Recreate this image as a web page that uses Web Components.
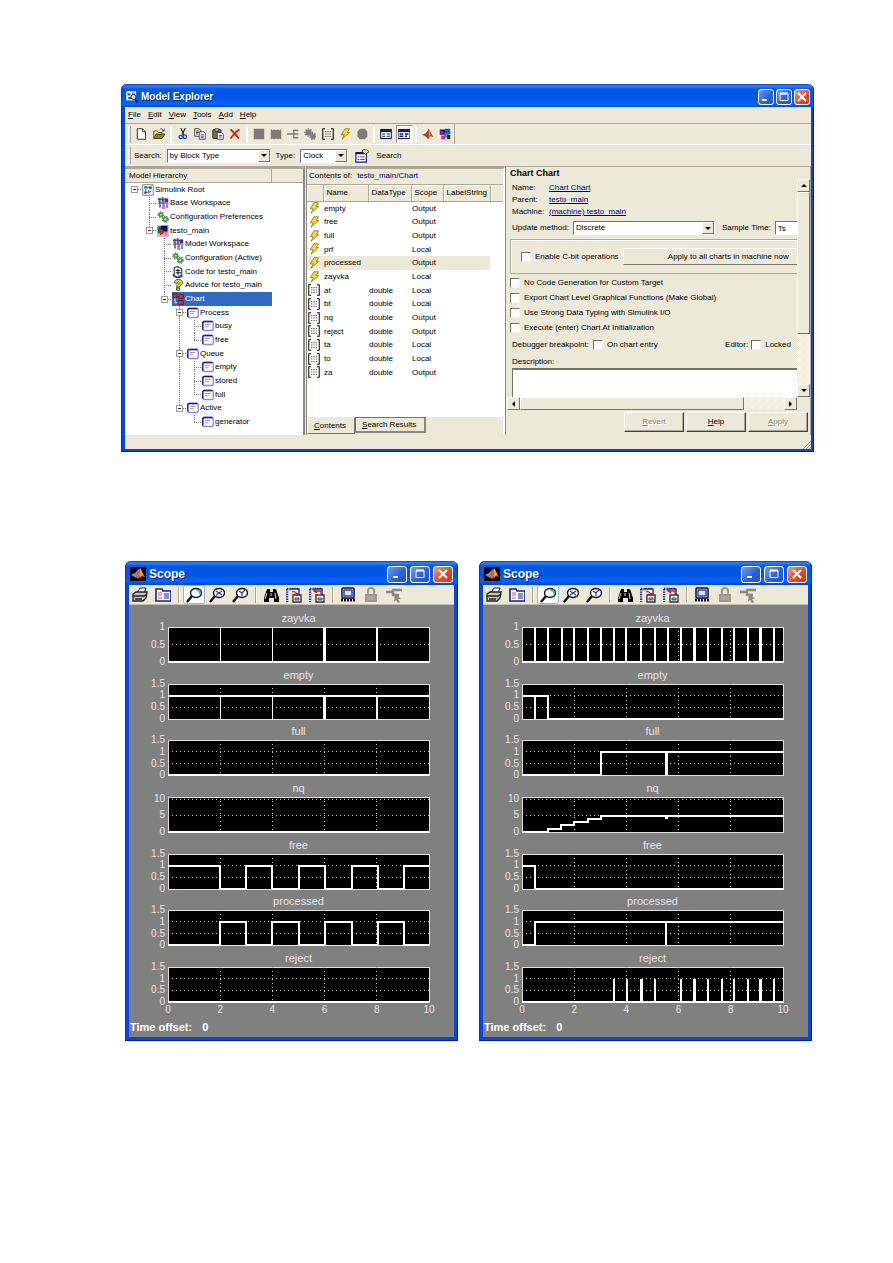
<!DOCTYPE html>
<html lang="en">
<head>
<meta charset="utf-8">
<title>Model Explorer and Scope windows</title>
<style>
  body { margin: 0; background: #fff; font-family: "Liberation Sans", Arial, sans-serif; font-size: 8px; line-height: 12px; color: #000; }
  main { padding: 84px 79px 60px 121px; }
  .scopes { display: flex; gap: 21px; margin-top: 109px; padding: 0 2px 0 4px; }
  scope-window { flex: 1; min-width: 0; }
</style>
</head>
<body>
<main>
  <model-explorer></model-explorer>
  <div class="scopes">
    <scope-window data-set="slow"></scope-window>
    <scope-window data-set="fast"></scope-window>
  </div>
</main>
<script>
const GEAR = (cx, cy, r, c) => `<circle cx="${cx}" cy="${cy}" r="${r}" fill="none" stroke="${c}" stroke-width="2.4"/><circle cx="${cx}" cy="${cy}" r="${r + 1.6}" fill="none" stroke="${c}" stroke-width="1.6" stroke-dasharray="1.6 1.7"/>`;
const WORKSPACE = '<rect x="2" y="1" width="3" height="9" fill="#2a8a70"/><rect x="6" y="0" width="3" height="6" fill="#c04fb8"/><rect x="10" y="2" width="5" height="5" fill="#40309a"/><path d="M1 3h13M3 8h12M8 4v11" stroke="#303080" stroke-width="1.5"/><path d="M7 9h4v7H7z" fill="#e070d0"/><path d="M12 8h3v7h-3z" fill="#48b8a0"/><path d="M3 10h2v4H3z" fill="#7030a0"/>';
const STATE = '<rect x="1" y="2" width="14" height="12" rx="2" fill="#fff" stroke="#8a86ec" stroke-width="1.800"/><path d="M1 13V4q0-2 2-2h11" fill="none" stroke="#1c1894" stroke-width="1.800"/><path d="M4 6h7M4 9h5" stroke="#777" stroke-width="1"/>';
const MAGNIFIER = inner => `<ellipse cx="10" cy="6" rx="5.5" ry="4.5" fill="#fff" stroke="#111" stroke-width="1.4"/><path d="M6 9l-5 6" stroke="#111" stroke-width="2.4"/>${inner}`;
const FLOPPY = arrow => `<path d="M1 2h11M1 2v13" stroke="#1a2a90" stroke-width="2.4" stroke-dasharray="1.4 1"/><path d="M5 2h8v6" fill="#fff" stroke="#1a2a90" stroke-width="1.4"/><path d="M7 8h8v7H7z" fill="#fff" stroke="#333" stroke-width="1.4"/><path d="M9 11h4v2H9z" fill="#aaa" stroke="#333" stroke-width=".8"/>${arrow}`;
const ICONS = {
  explorer: '<rect x="1" y="1" width="12" height="11" fill="#eef" stroke="#fff"/><path d="M2 3h4v3H2z" fill="#275"/><path d="M8 2h4v4H8z" fill="#d66"/><path d="M3 8h4v3H3z" fill="#357"/><circle cx="10" cy="8" r="3.4" fill="#cdeaf5" stroke="#223" stroke-width="1.3"/><path d="M12 11l3.5 4" stroke="#111" stroke-width="2"/>',
  matlabBox: '<path d="M0 1h16v14H0z" fill="#000"/><path d="M1 9l4-2 4-4 1 4-4 5z" fill="#4aa3d8"/><path d="M5 10l5-8 5 9-4-1-3 3z" fill="#e0602a"/><path d="M10 2l3 6-3 4z" fill="#f7a13c"/>',
  matlab: '<path d="M0 9l5-2 4-5 1 5-4 5z" fill="#3d63b8"/><path d="M4 10l5-9 6 11-4-1-3 4z" fill="#b83c1a"/><path d="M9 1l3 8-3 4z" fill="#f08a2c"/>',
  fresh: '<path d="M3 1h7l4 4v10H3z" fill="#fff" stroke="#111" stroke-width="1.1"/><path d="M10 1v4h4" fill="none" stroke="#111"/>',
  open: '<path d="M1 13V4h5l1 2h5v2" fill="#fff8a0" stroke="#222"/><path d="M1 14l3-6h12l-4 6z" fill="#8a8a10" stroke="#222"/><path d="M9 2c2-2 4-1 5 2M15 1v3h-3" fill="none" stroke="#222"/>',
  cut: '<path d="M5 0l4 9M11 0L7 9" stroke="#111" stroke-width="1.4"/><circle cx="5" cy="12" r="2.3" fill="none" stroke="#1a3cc0" stroke-width="1.6"/><circle cx="10.5" cy="11.5" r="2.3" fill="none" stroke="#1a3cc0" stroke-width="1.6"/>',
  copy: '<path d="M1 1h6l2 2v8H1z" fill="#fff" stroke="#111"/><path d="M2.500 4h4M2.500 6h4M2.500 8h3" stroke="#111"/><path d="M7 5h6l2 2v8H7z" fill="#fff" stroke="#14148a"/><path d="M9 9h4M9 11h4M9 13h4" stroke="#14148a"/>',
  paste: '<rect x="1" y="2" width="11" height="12" rx="1" fill="#7c7430" stroke="#111"/><path d="M4 1h5v3H4z" fill="#ddd" stroke="#111"/><path d="M7 6h6l2 2v7H7z" fill="#fff" stroke="#14148a"/><path d="M9 10h4M9 12h4" stroke="#14148a"/>',
  remove: '<path d="M2 2c4 3 8 8 11 12M14 2C9 5 5 10 2 14" fill="none" stroke="#e0170d" stroke-width="2.4"/>',
  square: '<path d="M1 1h14v14H1z" fill="#7d7b76"/>',
  jagged: '<path d="M1 1l2 2 3-1 2 1 2-1 3 1 2-2v14l-2-1-2 1-3-1-2 1-3-1-2 1z" fill="#7d7b76"/>',
  transition: '<path d="M0 8h8M15 3H9v10h6M9 8h6" fill="none" stroke="#7d7b76" stroke-width="1.8"/>',
  gearsGrey: '<circle cx="6" cy="6" r="4" fill="#7d7b76"/><circle cx="6" cy="6" r="4.800" fill="none" stroke="#7d7b76" stroke-width="1.500" stroke-dasharray="2 1.500"/><circle cx="12" cy="11" r="3.500" fill="#7d7b76"/><circle cx="12" cy="11" r="4.200" fill="none" stroke="#7d7b76" stroke-width="1.500" stroke-dasharray="2 1.500"/>',
  data: '<path d="M4 1H1v14h3M12 1h3v14h-3" fill="none" stroke="#111" stroke-width="1.400"/><path d="M5 4v9M8 4v9M11 4v9" stroke="#444" stroke-width="1.400" stroke-dasharray="1.500 1.800"/>',
  event: '<path d="M8 1h6l-3 5h3L4 15l3-6H3z" fill="#f6d63a" stroke="#8a6a10" stroke-width="1"/>',
  octagon: '<path d="M5 1h7l3 4v6l-3 4H5l-3-4V5z" fill="#7d7b76"/>',
  viewList: '<rect x="1" y="2" width="14" height="12" fill="#fff" stroke="#181c60" stroke-width="1.500"/><path d="M1 4h14" stroke="#181c60" stroke-width="3"/><path d="M3 8h4M3 11h4M9 8h4M9 11h4" stroke="#181c60" stroke-width="1.600"/>',
  viewDialog: '<rect x="0" y="2" width="16" height="12" fill="#fff" stroke="#181c60" stroke-width="1.500"/><path d="M0 4h16" stroke="#181c60" stroke-width="3"/><path d="M2 8h5M2 11h5M9 8h5M9 11h3" stroke="#181c60" stroke-width="1.800"/>',
  simulink: '<path d="M1 2h7v7H1z" fill="#14148a"/><path d="M2 3l5 3-5 3z" fill="#e81a50"/><path d="M8 1h7v7H8z" fill="#1e58c8"/><path d="M7 7h6v6H7z" fill="#0aa89a"/><path d="M3 10h5v5H3z" fill="#d81ad0"/><path d="M11 9h4v6h-4z" fill="#111"/>',
  find: '<path d="M1 4h12v11H1z" fill="#fff" stroke="#14148a" stroke-width="1.300"/><path d="M1 4h12v2H1z" fill="#14148a"/><path d="M3 9h2M6 9h5M3 12h2M6 12h5" stroke="#333"/><path d="M9 1h5l2 2-4 3-4-3z" fill="#fff080" stroke="#333"/>',
  root: '<path d="M1 1h14v14H1z" fill="#fff" stroke="#555"/><path d="M3 3h4v3H3z" fill="#179"/><path d="M9 3h4v4H9z" fill="#15a0a0"/><path d="M7 5h6M5 6v6M5 11h5" stroke="#333"/><path d="M8 8l5 2-5 3z" fill="#d040c8"/><path d="M3 10h3v3H3z" fill="#3940b0"/>',
  workspace: WORKSPACE,
  config: GEAR(5, 5, 2.2, '#3f9a48') + GEAR(11, 11, 2.4, '#5a8a50') + '<circle cx="5" cy="5" r="1" fill="#cfc"/>',
  model: '<path d="M0 0h16v16H0z" fill="#c9c5b8"/><path d="M1 2h7v9H1z" fill="#0a7a60"/><path d="M5 1h9v8H5z" fill="#101060"/><path d="M4 5l7 4-7 5z" fill="#f01818"/><path d="M10 9h4v5h-4z" fill="#e070e0"/>',
  code: '<path d="M3 2l5-1 5 3v8l-5 3-5-2z" fill="#fff" stroke="#223a90" stroke-width="1.600"/><path d="M8 4v8M5 6h6M5 9h7" stroke="#111" stroke-width="1.300"/><path d="M1 11c2 5 9 6 13 2" fill="none" stroke="#223a90" stroke-width="1.700"/>',
  advice: '<path d="M3 5c0-6 11-6 11 0 0 3-4 3-4 6H6c0-4 4-4 4-6 0-2-3-2-3 1z" fill="#f4e21a" stroke="#222"/><path d="M6 12h4v3H6z" fill="#f4e21a" stroke="#222"/>',
  chart: '<path d="M4 6v7h6M6 3h4" fill="none" stroke="#e9e0ff" stroke-width="1.300"/><path d="M1 1h6v5H1zM9 2h6v5H9zM8 10h7v5H8z" fill="#e8301c" stroke="#400a30"/>',
  state: STATE,
  print: '<path d="M5 6l3-5h6l-2 5" fill="#fff" stroke="#222"/><path d="M1 7l3-2h11l-1 6-3 3H1z" fill="#c8c6b8" stroke="#222" stroke-width="1.400"/><path d="M1 9h11l3-2M3 12h7" fill="none" stroke="#222" stroke-width="1.300"/>',
  params: '<path d="M1 2h6l1 2h8v10H1z" fill="#fff" stroke="#1c1c98" stroke-width="1.600"/><path d="M3 6h4M3 8h4M3 11h4" stroke="#e05028" stroke-width="1.200"/><path d="M9 7h5M9 9h5M9 11h5" stroke="#1c1c98" stroke-width="1.200"/>',
  zoom: MAGNIFIER('<path d="M10 3c3 0 4 2 4 4" fill="none" stroke="#2cc" stroke-width="1.600"/>'),
  zoomX: MAGNIFIER('<path d="M7 4l6 4M13 4l-6 4" stroke="#2238a8" stroke-width="1.200"/>'),
  zoomY: MAGNIFIER('<path d="M7 4l3 2 3-3M10 6v3" fill="none" stroke="#2238a8" stroke-width="1.200"/>'),
  binoculars: '<path d="M4 2h3v3h3V2h3l3 9v4h-5v-4H6v4H1v-4z" fill="#000"/><path d="M4 6l-2 6M12 6l1 6M8 6v3" stroke="#ddd"/>',
  saveAxes: FLOPPY('<path d="M6 5c3-1 4 0 5 3l1-2M11 8l-3-1" fill="none" stroke="#c02020" stroke-width="1.300"/>'),
  restoreAxes: FLOPPY('<path d="M12 7V4H5M8 2L5 4l3 2" fill="none" stroke="#c02020" stroke-width="1.300"/>'),
  floating: '<rect x="2" y="1" width="12" height="10" rx="1" fill="#fff" stroke="#111" stroke-width="1.500"/><rect x="4" y="3" width="8" height="6" fill="#dfe4ff" stroke="#2430e0" stroke-width="1.400"/><path d="M1 13h14" stroke="#111" stroke-width="3" stroke-dasharray="2 1"/>',
  lock: '<path d="M5 8V4c0-4 6-4 6 0v4" fill="none" stroke="#9a9890" stroke-width="2"/><path d="M2 7h12v8H2z" fill="#9a9890"/><path d="M4 10h8M4 12h8" stroke="#b4b2a8"/>',
  signal: '<path d="M0 5h7M7 3h9M7 8h6M7 2v7" fill="none" stroke="#8a8880" stroke-width="2.400"/><path d="M9 6l6 6-3 0 2 3-2 1-2-3-2 2z" fill="#8a8880"/>'
};

/* Registers an element whose open shadow root is cloned from a template. */
function element(tag, css, markup, setup) {
  const template = document.createElement('template');
  template.innerHTML = `<style>*{box-sizing:border-box}${css}</style>${markup}`;
  customElements.define(tag, class extends HTMLElement {
    constructor() {
      super();
      this.attachShadow({ mode: 'open' }).append(template.content.cloneNode(true));
    }
    connectedCallback() { if (setup && !this.ready) { this.ready = true; setup(this, this.shadowRoot); } }
  });
}

element('ui-icon',
  ':host{display:block;width:var(--icon,12px);height:var(--icon,12px);flex:none}svg{display:block;width:100%;height:100%}',
  '<svg viewBox="0 0 16 16" aria-hidden="true"></svg>',
  (host, root) => { root.querySelector('svg').innerHTML = ICONS[host.getAttribute('name')]; });

element('xp-window', `
  :host{display:flex;flex-direction:column;padding:0 var(--edge,3px) var(--edge,3px) 4px;border-radius:6px 6px 0 0;
    background:linear-gradient(#0a3cc8,#2f86ff 2px,#0058e6 5px,#0055e5 14px,#0466ff 20px,#0648d0 23px,#0a46dc 24px);box-shadow:inset -1px -1px #0019a8,inset 1px 0 #0831d9}
  header{display:flex;align-items:center;height:var(--bar,23px);padding:2px 1px 0 1px;gap:3px}
  h1{flex:1;margin:0;color:#fff;font-size:var(--title,10px);line-height:16px;font-weight:bold;text-shadow:1px 1px #0a2a90}
  .controls{display:flex;gap:var(--control-gap,2px)}
  button{width:var(--control-w,16px);height:var(--control-h,16px);padding:0;border:1px solid #fff;border-radius:3px;background:linear-gradient(135deg,#6f9df5,#2a5fd8 60%,#2456c8);display:grid;place-items:center}
  button.close{background:linear-gradient(135deg,#f0987c,#dd4a24 60%,#c83a14)}
  svg{width:12px;height:12px;display:block}
  .body{flex:1;background:#ece9d8;min-width:0}`, `
  <header><slot name="icon"></slot><h1></h1><div class="controls">
    <button aria-label="Minimize"><svg viewBox="0 0 12 12"><path d="M2 9h5" stroke="#fff" stroke-width="2"/></svg></button>
    <button aria-label="Maximize"><svg viewBox="0 0 12 12"><path d="M2 2.500h8v7H2z" fill="none" stroke="#fff"/><path d="M2 2.500h8" stroke="#fff" stroke-width="2"/></svg></button>
    <button class="close" aria-label="Close"><svg viewBox="0 0 12 12"><path d="M2 2l8 8M10 2l-8 8" stroke="#fff" stroke-width="2"/></svg></button>
  </div></header><div class="body"><slot></slot></div>`,
  (host, root) => { root.querySelector('h1').textContent = host.getAttribute('caption'); });

element('tool-button', `
  :host{display:block;flex:none}
  button{display:grid;place-items:center;width:var(--tool-w,17px);height:var(--tool-h,18px);padding:0;border:1px solid transparent;background:none}
  :host([pressed]) button{background:#f8f7f2;border-color:#9a988c #fff #fff #9a988c}
  :host([active]) button{background:#fff;border-color:#98b5d6;border-radius:2px}`,
  '<button></button>',
  (host, root) => {
    const button = root.querySelector('button');
    button.setAttribute('aria-label', host.getAttribute('label'));
    button.innerHTML = `<ui-icon name="${host.getAttribute('icon')}"></ui-icon>`;
  });

element('combo-box', `
  :host{display:grid;height:14px;min-width:0;border:1px solid;border-color:#76746a #fff #fff #76746a;background:#fff}
  select{grid-area:1/1;width:100%;min-width:0;appearance:none;border:0;border-radius:0;margin:0;padding:0 14px 0 2px;background:none;font:inherit;line-height:12px;color:#000}
  i{grid-area:1/1;justify-self:end;width:12px;display:grid;place-items:center;background:#ece9d8;border:1px solid;border-color:#fff #76746a #76746a #fff;pointer-events:none}
  i::after{content:"";border:3px solid transparent;border-top-color:#000;border-bottom:0}`,
  '<select><option></option></select><i></i>',
  (host, root) => {
    root.querySelector('option').textContent = host.getAttribute('value');
    root.querySelector('select').setAttribute('aria-label', host.getAttribute('label'));
  });

element('check-field', `
  :host{display:block}
  label{display:flex;align-items:center;gap:4px}
  input{appearance:none;flex:none;width:10px;height:10px;margin:0;background:#fff;border:1px solid;border-color:#76746a #f4f2ea #f4f2ea #76746a}`,
  '<label><input type="checkbox"><span><slot></slot></span></label>');

element('menu-bar', `
  :host{display:flex;gap:7px;height:17px;padding:2px 3px 0;border-bottom:1px solid #aca899}
  button{padding:0;border:0;background:none;font:inherit;line-height:12px;height:12px;color:#000}`,
  ['File', 'Edit', 'View', 'Tools', 'Add', 'Help'].map(t => `<button><u>${t[0]}</u>${t.slice(1)}</button>`).join(''));

const tool = (icon, label, extra = '') => `<tool-button icon="${icon}" label="${label}" ${extra}></tool-button>`;
element('explorer-tools', `
  :host{display:block}
  .row{display:flex;align-items:center;padding-left:3px}
  .first{height:21px;border-bottom:1px solid #fff}
  .group{display:flex;justify-content:space-around;align-items:center}
  .grip,.sep{flex:none;height:17px;border-left:1px solid #fff;border-right:1px solid #aca899}
  .grip{width:3px;margin:0 1px 0 0}.sep{width:2px;margin:0 2px;border-color:#aca899 #fff}
  .two{width:36px}.four{width:70px}.seven{width:121px}.end{border-right:1px solid #aca899;width:36px;height:20px}
  .second{height:22px;border-bottom:1px solid #aca899}
  .second>*{margin-right:5px}.second .grip{margin-right:3px}
  .block{width:104px}.type{width:48px}.second ui-icon{margin:0 7px 0 2px}`, `
  <div class="row first"><span class="grip"></span>
    <div class="group two">${tool('fresh', 'New')}${tool('open', 'Open')}</div><span class="sep"></span>
    <div class="group four">${tool('cut', 'Cut')}${tool('copy', 'Copy')}${tool('paste', 'Paste')}${tool('remove', 'Delete')}</div><span class="sep"></span>
    <div class="group seven">${tool('square', 'Block')}${tool('jagged', 'Model reference')}${tool('transition', 'Transition')}${tool('gearsGrey', 'Configuration')}${tool('data', 'Add data')}${tool('event', 'Add event')}${tool('octagon', 'Target')}</div><span class="sep"></span>
    <div class="group two">${tool('viewList', 'List view')}${tool('viewDialog', 'Dialog view', 'pressed')}</div><span class="sep"></span>
    <div class="group end">${tool('matlab', 'MATLAB')}${tool('simulink', 'Simulink library')}</div>
  </div>
  <div class="row second"><span class="grip"></span><span>Search:</span>
    <combo-box class="block" label="Search" value="by Block Type"></combo-box><span>Type:</span>
    <combo-box class="type" label="Type" value="Clock"></combo-box>
    <ui-icon name="find" style="--icon:14px"></ui-icon><span>Search</span></div>`);

/* level, icon, label, has children, last among its siblings */
const TREE = [
  [0, 'root', 'Simulink Root', 1, 1], [1, 'workspace', 'Base Workspace', 0, 0], [1, 'config', 'Configuration Preferences', 0, 0],
  [1, 'model', 'testo_main', 1, 1], [2, 'workspace', 'Model Workspace', 0, 0], [2, 'config', 'Configuration (Active)', 0, 0],
  [2, 'code', 'Code for testo_main', 0, 0], [2, 'advice', 'Advice for testo_main', 0, 0], [2, 'chart', 'Chart', 1, 1],
  [3, 'state', 'Process', 1, 0], [4, 'state', 'busy', 0, 0], [4, 'state', 'free', 0, 1],
  [3, 'state', 'Queue', 1, 0], [4, 'state', 'empty', 0, 0], [4, 'state', 'stored', 0, 0], [4, 'state', 'full', 0, 1],
  [3, 'state', 'Active', 1, 1], [4, 'state', 'generator', 0, 1]
];
function treeRows() {
  const open = [];
  return TREE.map(([level, icon, label, parent, last]) => {
    open[level] = !last;
    let cells = '';
    for (let i = 0; i < level; i++) cells += `<span class="cell ${open[i] ? 'through' : ''}"></span>`;
    cells += `<span class="cell elbow ${level ? (last ? 'last' : 'mid') : 'top'}">${parent ? `<button aria-label="Collapse ${label}"></button>` : ''}</span>`;
    return `<div class="node ${label === 'Chart' ? 'selected' : ''}" role="treeitem">${cells}<span class="name"><ui-icon name="${icon}"></ui-icon><span>${label}</span></span></div>`;
  }).join('');
}
element('model-tree', `
  :host{display:flex;flex-direction:column;min-width:0;border-top:2px solid #aca899}
  .head{display:flex;height:14px;background:#ece9d8;border-bottom:1px solid #aca899}
  .head span{padding-left:4px;line-height:13px}.head span:first-child{flex:1;border-right:1px solid #aca899}.head span:last-child{width:31px}
  .tree{flex:1;background:#fff;padding-right:31px}
  .nodes{display:grid;grid-auto-rows:1fr;height:246px}
  .node{display:flex;min-height:0;padding-left:2px}
  .cell{--v:repeating-linear-gradient(#777 0 1px,transparent 1px 2px);--h:repeating-linear-gradient(90deg,#777 0 1px,transparent 1px 2px);flex:none;width:15px;display:grid;place-items:center;background-repeat:no-repeat}
  .through{background-image:var(--v);background-size:1px 100%;background-position:7px 0}
  .top{background-image:var(--h);background-size:7px 1px;background-position:7px 50%}
  .mid{background-image:var(--v),var(--h);background-size:1px 100%,8px 1px;background-position:7px 0,7px 50%}
  .last{background-image:var(--v),var(--h);background-size:1px 50%,8px 1px;background-position:7px 0,7px 50%}
  button{width:7px;height:7px;padding:0;border:1px solid #a09e94;background:linear-gradient(#333,#333) center/3px 1px no-repeat #fff}
  .name{flex:1;display:flex;align-items:center;gap:1px;min-width:0;white-space:nowrap}
  .selected .name{background:#316ac5;color:#fff}`,
  `<div class="head"><span>Model Hierarchy</span><span></span></div><div class="tree"><div class="nodes" role="tree">${treeRows()}</div></div>`);

const ROWS = [
  ['empty', '', 'Output'], ['free', '', 'Output'], ['full', '', 'Output'], ['prf', '', 'Local'], ['processed', '', 'Output'], ['zayvka', '', 'Local'],
  ['at', 'double', 'Local'], ['bt', 'double', 'Local'], ['nq', 'double', 'Output'], ['reject', 'double', 'Output'], ['ta', 'double', 'Local'], ['to', 'double', 'Local'], ['za', 'double', 'Output']
];
element('contents-pane', `
  :host{display:flex;flex-direction:column;min-width:0;border-left:1px solid #8a8880;border-top:2px solid #aca899;border-right:2px solid #fff}
  .path{height:16px;line-height:14px;padding-left:2px;border-bottom:1px solid #aca899}.path b{font-weight:normal;color:#000080;margin-left:5px}
  .list{flex:1;background:#fff}
  table{width:100%;border-collapse:collapse;table-layout:fixed}
  th,td{padding:0;font-weight:normal;text-align:left;line-height:12px}
  th{height:16px;background:#ece9d8;border-right:1px solid #aca899;border-bottom:1px solid #aca899;padding-left:3px;box-shadow:inset 1px 1px #fff}
  th:last-child{border-right:0}
  td{padding-left:1px;line-height:13px}
  tr.on td:not(:last-child){background:#ece9d8}
  tbody tr{height:var(--row)}
  .tabs{display:flex;height:18px}
  .tabs button{padding:0 8px 0 6px;font:inherit;background:#ece9d8;color:#000;border:1px solid;border-color:#ece9d8 #76746a #76746a #fff;height:17px}
  .tabs button+button{border-color:#76746a #8a8880 #8a8880 #76746a;height:16px;border-width:1px 2px 2px 1px}`,
  `<div class="path">Contents of:<b>testo_main/Chart</b></div><div class="list"><table>
   <colgroup><col style="width:16px"><col style="width:45px"><col style="width:43px"><col style="width:32px"><col style="width:47px"><col></colgroup>
   <thead><tr><th></th><th>Name</th><th>DataType</th><th>Scope</th><th>LabelString</th><th></th></tr></thead><tbody>${ROWS.map(([n, d, s], i) =>
    `<tr style="--row:${i % 3 ? 14 : 13}px"${n === 'processed' ? ' class="on"' : ''}><td><ui-icon name="${d ? 'data' : 'event'}"></ui-icon></td><td>${n}</td><td>${d}</td><td>${s}</td><td></td><td></td></tr>`).join('')}</tbody></table></div>
   <div class="tabs"><button><u>C</u>ontents</button><button><u>S</u>earch Results</button></div>`);

element('chart-dialog', `
  :host{display:flex;flex-direction:column;min-width:0;padding:1px 0 0 1px;border-left:1px solid #8a8880;border-right:1px solid #aca899}
  h2{margin:0 0 0 3px;font-size:9px;line-height:11px}
  .scroll{display:grid;grid-template-columns:minmax(0,1fr) 13px;grid-template-rows:218px 13px}
  .view{overflow:hidden;padding:3px 0 0 3px}
  form{width:calc(100% + 38px)}
  dl{display:grid;grid-template-columns:37px 1fr;grid-auto-rows:12px;margin:0 0 3px 2px}dd{margin:0}a{color:#000080}
  .line{display:flex;align-items:center;gap:4px;padding-left:2px}
  .line combo-box{width:142px;margin-right:3px}
  input[type=text]{flex:1;min-width:0;height:14px;padding:0 2px;border:1px solid;border-color:#76746a #fff #fff #76746a;background:#fff;font:inherit}
  fieldset{display:flex;align-items:center;height:35px;margin:4px 0 2px;padding:0 0 0 10px;border:1px solid #aca899;box-shadow:inset 1px 1px #fff}
  fieldset button{flex:1;height:17px;margin-left:4px}
  button{padding:0;font:inherit;color:#000;background:#ece9d8;border:1px solid;border-color:#fff #76746a #76746a #fff}
  .checks check-field{height:15px;padding-top:1px}
  .debug{margin-top:2px;height:14px}.debug .lock{display:flex;gap:3px;margin-left:auto;margin-right:44px}
  .desc{display:block;margin:4px 0 0 2px}
  textarea{display:block;margin-left:2px;width:calc(100% - 2px);height:50px;border:1px solid #76746a;border-width:2px 1px 1px 1px;border-radius:0;background:#fff;resize:none;font:inherit}
  .bar{display:flex;background:repeating-conic-gradient(#fff 0 25%,#ece9d8 0 50%) 0 0/2px 2px}
  .v{flex-direction:column}
  .bar button{flex:none;width:13px;height:13px;display:grid;place-items:center}
  .bar button::after{content:"";border:3px solid transparent}
  .bar .up::after{border-bottom-color:#000;border-top:0}.bar .down::after{border-top-color:#000;border-bottom:0}
  .bar .left::after{border-right-color:#000;border-left:0}.bar .right::after{border-left-color:#000;border-right:0}
  .thumb{background:#ece9d8;border:1px solid;border-color:#fff #76746a #76746a #fff}
  .v .thumb{flex:0 0 142px}.v .down{margin-top:auto}.h .thumb{flex:0 0 224px}.h .right{margin-left:auto}
  footer{display:flex;justify-content:flex-end;gap:2px;padding:2px 2px 0 0}
  footer button{width:60px;height:20px;border-color:#fff #44423a #44423a #fff;box-shadow:inset -1px -1px #aca899}
  footer button:disabled{color:#8a8778;text-shadow:1px 1px #fff}`, `
  <h2>Chart Chart</h2>
  <div class="scroll"><div class="view"><form>
    <dl><dt>Name:</dt><dd><a href="#chart">Chart Chart</a></dd><dt>Parent:</dt><dd><a href="#parent">testo_main</a></dd><dt>Machine:</dt><dd><a href="#machine">(machine) testo_main</a></dd></dl>
    <div class="line"><span>Update method:</span><combo-box label="Update method" value="Discrete"></combo-box><label for="ts">Sample Time:</label><input type="text" id="ts" value="Ts"></div>
    <fieldset><check-field>Enable C-bit operations</check-field><button type="button">Apply to all charts in machine now</button></fieldset>
    <div class="checks"><check-field>No Code Generation for Custom Target</check-field><check-field>Export Chart Level Graphical Functions (Make Global)</check-field><check-field>Use Strong Data Typing with Simulink I/O</check-field><check-field>Execute (enter) Chart At Initialization</check-field></div>
    <div class="line debug"><span>Debugger breakpoint:</span><check-field>On chart entry</check-field><span class="lock"><span>Editor:</span><check-field>Locked</check-field></span></div>
    <label class="desc" for="d">Description:</label><textarea id="d"></textarea>
  </form></div>
  <div class="bar v"><button class="up" aria-label="Scroll up"></button><span class="thumb"></span><button class="down" aria-label="Scroll down"></button></div>
  <div class="bar h"><button class="left" aria-label="Scroll left"></button><span class="thumb"></span><button class="right" aria-label="Scroll right"></button></div></div>
  <footer><button disabled><u>R</u>evert</button><button><u>H</u>elp</button><button disabled><u>A</u>pply</button></footer>`);

element('model-explorer', `
  :host{display:block}
  .panes{display:grid;grid-template-columns:minmax(0,180fr) minmax(0,200fr) minmax(0,306fr);height:268px}
  model-tree{border-right:2px solid #8a8880}
  contents-pane{margin-left:1px}
  .status{height:14px;display:flex;justify-content:flex-end;align-items:flex-end}
  .status svg{width:9px;height:9px}`, `
  <xp-window caption="Model Explorer"><ui-icon slot="icon" name="explorer"></ui-icon>
  <menu-bar></menu-bar><explorer-tools></explorer-tools>
  <div class="panes"><model-tree></model-tree><contents-pane></contents-pane><chart-dialog></chart-dialog></div>
  <div class="status"><svg viewBox="0 0 9 9"><path d="M1 9l8-8M4 9l5-5M7 9l2-2" stroke="#9a988c"/></svg></div></xp-window>`);

/* trace: step changes as time:value; spikes: time, then - for a thin or ! for a wide one, optional @low-high */
const P = (title, max, ticks, trace, spikes = '') => ({ title, max, ticks, trace, spikes });
const LOW = [1.5, 1, 0.5, 0];
const SETS = {
  slow: [
    P('zayvka', 1, [1, 0.5, 0], '0:0', '2- 4- 6! 8'), P('empty', 1.5, LOW, '0:1', '2- 4- 6! 8'), P('full', 1.5, LOW, '0:0'), P('nq', 10.7, [10, 5, 0], '0:0'),
    P('free', 1.5, LOW, '0:1 2:0 3:1 4:0 5:1 6:0 7.05:1 8.05:0 9.05:1'), P('processed', 1.5, LOW, '0:0 2:1 3:0 4:1 5:0 6:1 7.05:0 8.05:1 9.05:0'), P('reject', 1.5, LOW, '0:0')
  ],
  fast: [
    P('zayvka', 1, [1, 0.5, 0], '0:0', '0.5 1 1.52 2 2.54 3.04 3.53 4 4.57 5.09 5.58 6.09 6.6! 7.14 7.65 8.13 8.65 9.14! 9.65'),
    P('empty', 1.5, LOW, '0:1 1:0', '0.5'), P('full', 1.5, LOW, '0:0 3.04:1', '5.53!'),
    P('nq', 10.7, [10, 5, 0], '0:0 1:1 1.5:2 2:3 2.54:4 3.04:5', '5.53!@4-5'),
    P('free', 1.5, LOW, '0:1 0.5:0'), P('processed', 1.5, LOW, '0:0 0.5:1', '5.5'),
    P('reject', 1.5, LOW, '0:0', '3.53 4.04 4.57! 5.09 6.09 6.6! 7.14 7.65 8.13 8.65 9.14! 9.65')
  ]
};
element('scope-plot', `
  :host{display:grid;grid-template-columns:39px minmax(0,1fr) 25px;grid-template-rows:12px 35px;row-gap:3px;color:#e6e6e6;font-size:10px}
  h2{grid-column:2;margin:0;text-align:center;font-size:11px;font-weight:normal;line-height:12px}
  .ticks{grid-column:1;display:flex;flex-direction:column;justify-content:space-between;margin:-5px 0;padding-right:3px;text-align:right;line-height:10px}
  .ticks.ten{padding-top:2px}
  svg{display:block;width:100%;height:35px;overflow:visible;fill:none;stroke:#fff;shape-rendering:crispEdges}
  svg *{vector-effect:non-scaling-stroke}
  .grid{stroke:#c4c4c4;stroke-dasharray:1 3}
  .wide{stroke-width:3}.trace{stroke-width:2}`,
  '<h2></h2><div class="ticks"></div><svg preserveAspectRatio="none"></svg>',
  (host, root) => {
    const { title, max, ticks, trace, spikes } = host.plot, y = v => (max - v) / max * 34;
    root.querySelector('h2').textContent = title;
    const list = root.querySelector('.ticks');
    list.innerHTML = ticks.map(t => `<span>${t}</span>`).join('');
    list.classList.toggle('ten', max > 10);
    let grid = '', line = '';
    for (const x of [2, 4, 6, 8]) grid += `M${x * 26} 0V34`;
    for (const t of ticks) if (t && t < max) grid += `M0 ${y(t)}H260`;
    trace.split(' ').forEach((s, i) => { const [t, v] = s.split(':'); line += i ? `H${t * 26}V${y(v)}` : `M0 ${y(v)}`; });
    const bars = spikes.split(' ').filter(Boolean).map(s => {
      const [, t, weight, lo = 0, hi = 1] = s.match(/^([\d.]+)([!-]?)(?:@(\d+)-(\d+))?$/);
      return `<path class="${{ '!': 'wide', '-': 'thin' }[weight] || 'trace'}" d="M${t * 26} ${y(lo)}V${y(hi)}"/>`;
    }).join('');
    const svg = root.querySelector('svg');
    svg.setAttribute('viewBox', '0 0 260 34');
    svg.innerHTML = `<path d="M0 0H260V34H0z" fill="#000" stroke="#e0e0e0"/><path class="grid" d="${grid}"/><path class="trace" d="${line}H260"/>${bars}`;
  });

element('scope-window', `
  :host{display:block;--icon:16px;--bar:24px;--title:12px;--edge:4px;--control-w:20px;--control-h:17px;--control-gap:3px}
  .tools{display:flex;align-items:center;height:20px;--tool-w:22px;--tool-h:19px;gap:1px;border-bottom:1px solid #c0bdb0}
  .sep{width:2px;height:16px;border-left:1px solid #aca899;border-right:1px solid #fff;margin:0 2px 0 3px}
  .face{background:#808080;padding:7px 0 3px;color:#e6e6e6}
  .plots{display:flex;flex-direction:column;justify-content:space-between;height:390px}
  .axis{display:flex;justify-content:space-between;margin:3px 15px 0 29px;font-size:10px;line-height:10px}
  .axis span{width:20px;text-align:center}
  .time{margin:5px 0 0 1px;font-size:11px;line-height:14px;font-weight:bold;color:#fff}.time b{margin-left:10px}`, `
  <xp-window caption="Scope"><ui-icon slot="icon" name="matlabBox"></ui-icon>
  <div class="tools">${tool('print', 'Print')}${tool('params', 'Parameters')}<span class="sep"></span>${tool('zoom', 'Zoom', 'active')}${tool('zoomX', 'Zoom X-axis')}${tool('zoomY', 'Zoom Y-axis')}<span class="sep"></span>${tool('binoculars', 'Autoscale')}${tool('saveAxes', 'Save axes')}${tool('restoreAxes', 'Restore axes')}<span class="sep"></span>${tool('floating', 'Floating scope')}${tool('lock', 'Lock axes')}${tool('signal', 'Signal selection')}</div>
  <div class="face"><div class="plots"></div>
  <div class="axis"><span>0</span><span>2</span><span>4</span><span>6</span><span>8</span><span>10</span></div>
  <div class="time">Time offset:<b>0</b></div></div></xp-window>`,
  (host, root) => {
    root.querySelector('.plots').append(...SETS[host.dataset.set].map(plot => Object.assign(document.createElement('scope-plot'), { plot })));
  });
</script>
</body>
</html>
